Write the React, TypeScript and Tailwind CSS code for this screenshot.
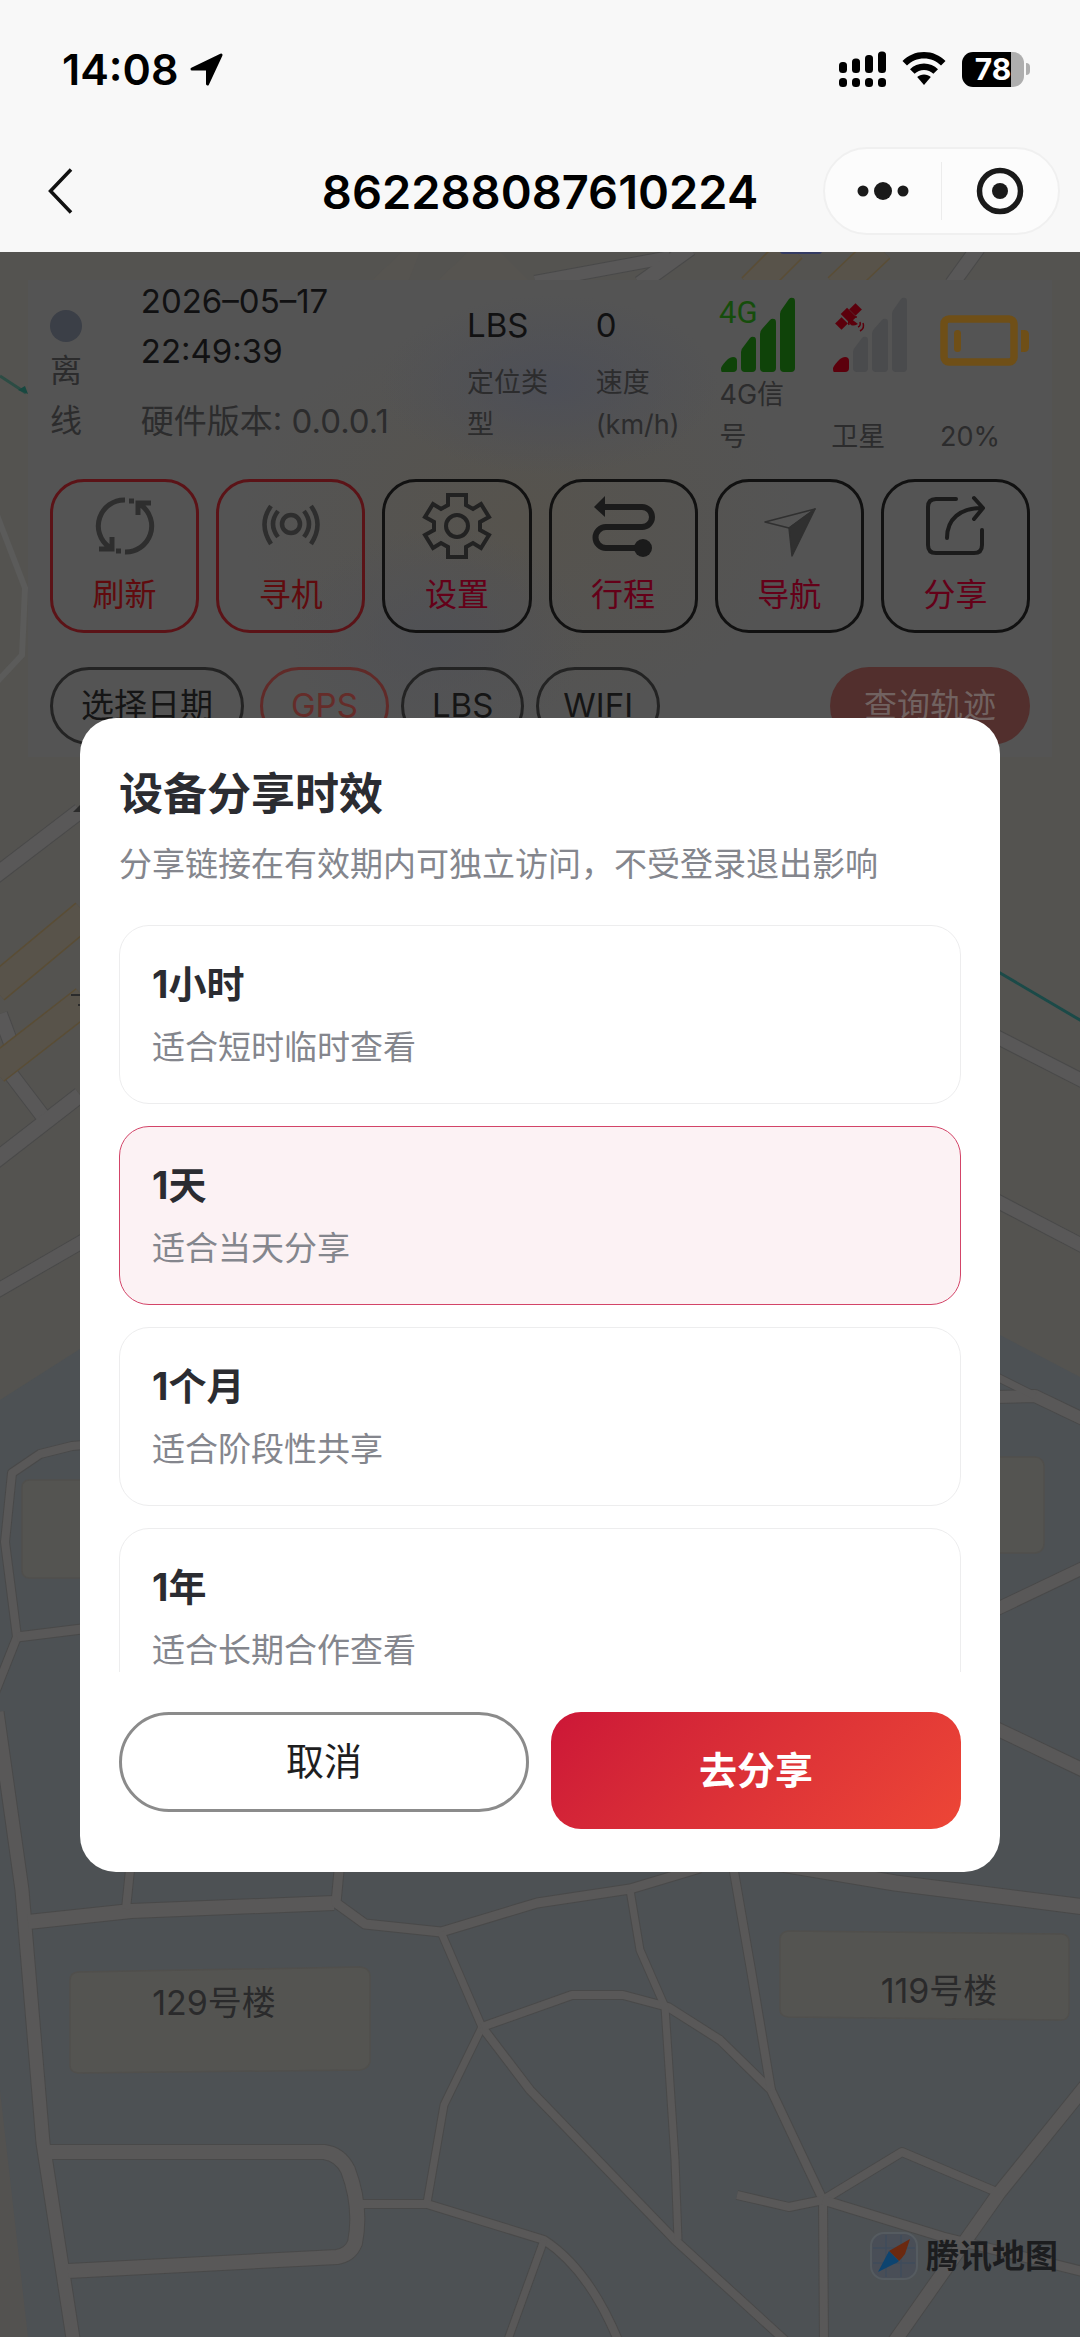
import React, { useState } from "react";

const FONT = "font-['Inter','Noto_Sans_CJK_SC',sans-serif]";

function StatusIcons() {
  return (
    <div className="flex items-center gap-4">
      <svg width="47" height="36" viewBox="0 0 47 36" fill="#000" aria-hidden="true">
        {[0, 13, 26, 39].map((x, i) => (
          <g key={x}>
            <rect x={x} y={11 - i * 3.5} width="8" height={11 + i * 3.5} rx="3.5" />
            <rect x={x} y="27" width="8" height="9" rx="3.5" />
          </g>
        ))}
      </svg>
      <svg width="44" height="34" viewBox="0 0 44 34" aria-hidden="true">
        <path d="M22 0C13.500 0 6 3.400 0.500 9L5 13.600C9.500 9 15.500 6.500 22 6.500S34.500 9 39 13.600L43.500 9C38 3.400 30.500 0 22 0Z" />
        <path d="M22 11.500C16.500 11.500 11.700 13.700 8 17.200L12.600 21.800C15.100 19.400 18.400 18 22 18S28.900 19.400 31.400 21.800L36 17.200C32.300 13.700 27.500 11.500 22 11.500Z" />
        <path d="M22 22.500C19.300 22.500 16.900 23.500 15.200 25.100L22 33L28.800 25.100C27.100 23.500 24.700 22.500 22 22.500Z" />
      </svg>
      <div className="flex items-center gap-0.5">
        <div className="flex h-[35px] w-[62px] items-center justify-center rounded-[11px] bg-linear-to-r from-black from-79% to-[#aeaeae] to-79% text-[30px] leading-none font-bold text-white">
          78
        </div>
        <div className="h-3 w-1 rounded-r-full bg-[#aeaeae]" />
      </div>
    </div>
  );
}

function Header() {
  return (
    <header className="bg-[#f8f8f8] text-black">
      <div className="flex h-[138px] items-center justify-between pr-[50px] pl-[62px]">
        <div className="flex items-center gap-3">
          <span className="text-[43px] leading-none font-semibold">14:08</span>
          <svg width="33" height="33" viewBox="0 0 33 33" aria-hidden="true">
            <path
              d="M31 2L17.500 31V17.500Q17.500 16 16 16H2Z"
              fill="#000"
              stroke="#000"
              strokeWidth="3"
              strokeLinejoin="round"
            />
          </svg>
        </div>
        <StatusIcons />
      </div>
      <div className="grid h-[114px] grid-cols-[1fr_auto_1fr] items-start px-5 pt-[9px]">
        <button aria-label="返回" className="ml-6 flex h-[88px] w-12 items-center">
          <svg width="32" height="50" viewBox="0 0 32 50" fill="none" aria-hidden="true">
            <path d="M27 3.500L6.500 25L27 46.500" stroke="#111" strokeWidth="3.500" />
          </svg>
        </button>
        <h1 className="text-[47px] leading-[90px] font-semibold">862288087610224</h1>
        <div className="flex h-[88px] w-[237px] items-center justify-self-end rounded-full border-2 border-[#f0f0f0] bg-[#fcfcfc]">
          <button aria-label="更多" className="flex h-full flex-1 items-center justify-center">
            <svg width="52" height="20" viewBox="0 0 52 20" fill="#1a1a1a" aria-hidden="true">
              <circle cx="6" cy="10" r="5.500" />
              <circle cx="26" cy="10" r="9" />
              <circle cx="46" cy="10" r="5.500" />
            </svg>
          </button>
          <div className="h-[58px] w-px bg-[#ececec]" />
          <button aria-label="关闭" className="flex h-full flex-1 items-center justify-center">
            <svg width="48" height="48" viewBox="0 0 48 48" aria-hidden="true">
              <circle cx="24" cy="24" r="20.500" fill="none" stroke="#1a1a1a" strokeWidth="5.500" />
              <circle cx="24" cy="24" r="8" fill="#1a1a1a" />
            </svg>
          </button>
        </div>
      </div>
    </header>
  );
}

const ROADS: { d: string; w: number }[] = [
  { d: "M-5 876L80 811", w: 15 },
  { d: "M0 1014L12 1046", w: 14 },
  { d: "M10 1073L45 1119", w: 14 },
  { d: "M-5 1161L80 1095", w: 15 },
  { d: "M-5 1292L85 1240", w: 13 },
  { d: "M95 1444L72 1446L40 1454L12 1473L5 1542L17 1637L-6 1695", w: 8 },
  { d: "M17 1637L90 1628", w: 9 },
  { d: "M-3 1712L22 1890L43 2143L74 2345", w: 13 },
  { d: "M995 1036L1085 1082", w: 13 },
  { d: "M995 1200L1085 1247", w: 13 },
  { d: "M995 1397L1035 1396L1085 1420", w: 12 },
  { d: "M995 1376L1035 1396", w: 7 },
  { d: "M995 1610L1085 1567", w: 12 },
  { d: "M995 1728L1085 1771", w: 13 },
  { d: "M28 1922L131 1911L334 1903", w: 14 },
  { d: "M131 1860L126 1909", w: 8 },
  { d: "M340 1860L336 1903L365 1924L441 1932L537 1903L630 1889L700 1868", w: 9 },
  { d: "M441 1932L482 2027L444 2105L427 2203", w: 7 },
  { d: "M482 2027L530 2090L675 2240L790 2345", w: 8 },
  { d: "M482 2027L572 1995H623L668 2007L720 2040L771 2090L823 2200L824 2345", w: 8 },
  { d: "M630 1890L640 1950L665 2007L675 2160L678 2240", w: 7 },
  { d: "M732 1860L751 1970L771 2090", w: 8 },
  { d: "M770 1862L895 1883L1085 1907", w: 15 },
  { d: "M737 2195L789 2207L823 2200L902 2152L999 2193", w: 8 },
  { d: "M823 2200L943 2237L1085 2272", w: 9 },
  { d: "M1088 2083L999 2193L892 2345", w: 13 },
  { d: "M50 2152H324Q340 2154 348 2170Q362 2207 355 2243Q350 2255 337 2257L68 2271", w: 14 },
  { d: "M360 2204H427L544 2240Q590 2270 620 2345", w: 8 },
  { d: "M544 2240L506 2345", w: 7 },
  { d: "M535 282L670 257", w: 12 },
  { d: "M640 284L690 248", w: 15 },
  { d: "M952 284L978 248", w: 14 },
];

const AVENUES = ["M-5 989L85 914", "M-5 1070L85 1000", "M752 288L792 248", "M838 288L880 248"];

function MapCanvas() {
  return (
    <svg
      className="absolute inset-0 h-full w-full"
      viewBox="0 252 1080 2085"
      preserveAspectRatio="xMidYMin slice"
      fill="none"
      aria-hidden="true"
    >
      <rect y="252" width="1080" height="2085" fill="#545350" />
      <path d="M0 1400L80 1349L540 1250L1000 1335L1080 1377V2337H0Z" fill="#4d5154" />
      <path d="M0 2090L28 2337H0Z" fill="#535250" />
      <g fill="#545451" stroke="#504f4c" strokeWidth="1.500">
        <rect x="22" y="1480" width="120" height="98" rx="7" />
        <rect x="900" y="1457" width="144" height="96" rx="9" />
        <path d="M78 1972L360 1967Q370 1968 370 1976V2062Q368 2069 360 2070L78 2073Q70 2072 70 2066V1980Q70 1973 78 1972Z" />
        <path d="M788 1931L1062 1934Q1069 1935 1069 1941V2013Q1068 2020 1061 2020L788 2017Q780 2016 780 2010V1938Q781 1932 788 1931Z" />
      </g>
      {ROADS.map((r) => (
        <path key={`e${r.d}`} d={r.d} stroke="#494949" strokeWidth={r.w + 2} strokeLinejoin="round" />
      ))}
      {ROADS.map((r) => (
        <path key={r.d} d={r.d} stroke="#595858" strokeWidth={r.w} strokeLinejoin="round" />
      ))}
      {AVENUES.map((d) => (
        <g key={d}>
          <path d={d} stroke="#5a4d35" strokeWidth="30" />
          <path d={d} stroke="#58534a" strokeWidth="27" />
        </g>
      ))}
      <path d="M370 282L402 252H420L408 282Z M436 282L468 252H500L530 282Z" fill="#565450" />
      <rect x="780" y="246" width="42" height="8" rx="3" fill="#343b63" />
      <path d="M-5 510L25 588L22 655L-5 684" stroke="#5b5b5a" strokeWidth="6" />
      <path d="M0 376L26 393" stroke="#2c4c44" strokeWidth="3" />
      <path d="M18 390L28 394L25 386Z" fill="#174840" />
      <path d="M995 970L1085 1023" stroke="#1b4a48" strokeWidth="3" />
      <path d="M73 812L82 803V812Z" fill="#2b2b2b" />
      <path d="M71 995H82M78 1005H82" stroke="#2b2b2b" strokeWidth="2" />
      <g fill="#2a2a2b" fontSize="34" textAnchor="middle">
        <text x="214" y="2015">129号楼</text>
        <text x="939" y="2003">119号楼</text>
      </g>
    </svg>
  );
}

const BARS = [
  "M3 76Q2 76 2 72Q3 69 9 63Q12 61 14 61Q18 61 18 65V72Q18 76 14 76Z",
  "M22 56Q22 53 25 50L31 42Q33 40 35 41Q37 41 37 45V72Q37 76 33 76H26Q22 76 22 72Z",
  "M41 38Q41 35 43 33L51 24Q53 22 55 23Q57 23 57 27V72Q57 76 53 76H45Q41 76 41 72Z",
  "M61 18Q61 15 63 13L70 3Q72 1 74 2Q76 2 76 6V72Q76 76 72 76H65Q61 76 61 72Z",
];

function SignalIcon() {
  return (
    <svg className="overflow-visible" width="78" height="78" viewBox="0 0 78 78" fill="#0f4309" aria-hidden="true">
      {BARS.map((d) => (
        <path key={d} d={d} />
      ))}
      <text x="0" y="27" fontSize="31" fontFamily="Roboto" fill="#164d0c">
        4G
      </text>
    </svg>
  );
}

function SatelliteIcon() {
  return (
    <svg width="78" height="78" viewBox="0 0 78 78" fill="#4a4b4d" aria-hidden="true">
      {BARS.map((d, i) => (
        <path key={d} d={d} fill={i === 0 ? "#5c000c" : "#4a4b4d"} />
      ))}
      <g fill="#5c000c">
        <rect x="20" y="9" width="9" height="9" transform="rotate(-45 24.500 13.500)" />
        <rect x="6" y="23" width="9" height="9" transform="rotate(-45 10.500 27.500)" />
        <rect x="13" y="13" width="9" height="13" transform="rotate(-45 17.500 19.500)" />
        <path d="M19 22L27 28Q21 31 19 28Q17 26 19 22Z" />
      </g>
      <path d="M18 29Q16 20 26 21M27 31Q30 30 29 26M29 35Q34 32 32 27" fill="none" stroke="#5c000c" strokeWidth="1.500" />
    </svg>
  );
}

function BatteryIcon() {
  return (
    <svg width="90" height="78" viewBox="0 0 90 78" fill="#6f4f17" aria-hidden="true">
      <rect x="4" y="23" width="70" height="43" rx="5" fill="none" stroke="#6f4f17" strokeWidth="7.500" />
      <rect x="14" y="34" width="7" height="22" rx="3.500" />
      <path d="M81 34H84Q89 34 89 39V51Q89 56 84 56H81Z" />
    </svg>
  );
}

function StatsRow() {
  return (
    <div className="grid grid-cols-[91fr_327fr_129fr_124fr_112fr_109fr_88fr] text-[27px] leading-[42px] text-[#2c2c2d]">
      <div className="flex flex-col pt-[30px]">
        <span className="size-8 rounded-full bg-[#3b3f47]" />
        <span className="mt-1 w-8 text-[32px] leading-[50px]">离线</span>
      </div>
      <div className="flex flex-col text-[33px] text-[#111112]">
        <span>2026–05–17</span>
        <span className="mt-1 leading-[50px]">22:49:39</span>
        <span className="mt-5 leading-[50px] text-[#2c2c2d]">硬件版本: 0.0.0.1</span>
      </div>
      <div className="flex flex-col pt-5">
        <span className="text-[33px] leading-[50px] text-[#111112]">LBS</span>
        <span className="mt-3 w-[84px]">定位类型</span>
      </div>
      <div className="flex flex-col pt-5">
        <span className="text-[33px] leading-[50px] text-[#111112]">0</span>
        <span className="mt-3">
          速度
          <br />
          (km/h)
        </span>
      </div>
      <div className="flex flex-col pt-4">
        <SignalIcon />
        <span className="w-[72px]">4G信号</span>
      </div>
      <div className="flex flex-col justify-between pt-4">
        <SatelliteIcon />
        <span>卫星</span>
      </div>
      <div className="flex flex-col justify-between pt-4">
        <BatteryIcon />
        <span>20%</span>
      </div>
    </div>
  );
}

const ACTIONS: { label: string; frame: string; icon: React.ReactNode }[] = [
  {
    label: "刷新",
    frame: "border-[#5b1317] text-[#600b0e]",
    icon: (
      <g stroke="#2e2e2e" strokeWidth="5">
        <path d="M35 9A26 26 0 0 0 19 56M22 46V58H9M35 61A26 26 0 0 0 51 14M48 24V12H61" />
        <path d="M26 60H31M39 10H44" />
      </g>
    ),
  },
  {
    label: "寻机",
    frame: "border-[#5b1317] text-[#600b0e]",
    icon: (
      <g stroke="#2e2e2e" strokeWidth="4.500">
        <circle cx="35" cy="33" r="9" />
        <path d="M22 20Q12 33 22 46M48 20Q58 33 48 46M15 15Q2 33 15 53M55 15Q68 33 55 53" />
      </g>
    ),
  },
  {
    label: "设置",
    frame: "border-[#111111] text-[#640018]",
    icon: (
      <g stroke="#222222" strokeWidth="4">
        <path d="M26 4H44V14L51 18L59 13L67 26L58 31V39L67 44L59 57L51 52L44 56V66H26V56L19 52L11 57L3 44L12 39V31L3 26L11 13L19 18L26 14Z" />
        <circle cx="35" cy="35" r="11" />
      </g>
    ),
  },
  {
    label: "行程",
    frame: "border-[#111111] text-[#640018]",
    icon: (
      <g>
        <path d="M15 16H54A10 10 0 0 1 54 36H18A10 10 0 0 0 18 57H55" stroke="#1b1b1b" strokeWidth="6" />
        <path d="M6 16L17 5V26Z" fill="#1b1b1b" />
        <circle cx="55" cy="57" r="9" fill="#1b1b1b" />
      </g>
    ),
  },
  {
    label: "导航",
    frame: "border-[#111111] text-[#640018]",
    icon: (
      <g stroke="#303030" strokeWidth="1.500" strokeLinejoin="round">
        <path d="M61 18L11 31L35 37Z" />
        <path d="M61 18L35 37L38 65Z" fill="#303030" />
      </g>
    ),
  },
  {
    label: "分享",
    frame: "border-[#111111] text-[#640018]",
    icon: (
      <g stroke="#1b1b1b" strokeWidth="4" strokeLinecap="round" strokeLinejoin="round">
        <path d="M36 8H16Q8 8 8 16V54Q8 62 16 62H54Q62 62 62 54V39M27 47C27 28 40 17 62 17M54 7L63 17L54 28" />
      </g>
    ),
  },
];

function ControlPanel() {
  return (
    <section className="relative mx-7 mt-7 bg-[#545454] bg-[radial-gradient(ellipse_170px_90px_at_51%_22%,#4d4f57,transparent),radial-gradient(ellipse_150px_110px_at_40%_75%,#505155,transparent),radial-gradient(ellipse_280px_200px_at_48%_50%,#56534d,transparent)] px-[22px] pb-3">
      <StatsRow />
      <div className="mt-[21px] grid grid-cols-6 gap-[17px]">
        {ACTIONS.map((a) => (
          <button
            key={a.label}
            className={`flex h-[154px] flex-col items-center rounded-[34px] border-3 pt-[9px] text-[32px] leading-[48px] ${a.frame}`}
          >
            <svg width="70" height="70" viewBox="0 0 70 70" fill="none" aria-hidden="true">
              {a.icon}
            </svg>
            <span className="mt-2.5">{a.label}</span>
          </button>
        ))}
      </div>
      <div className="mt-[34px] flex gap-3 text-[33px] text-[#151515]">
        <button className="mr-1 h-[78px] rounded-full border-3 border-[#232323] px-7">选择日期</button>
        <button className="h-[78px] rounded-full border-3 border-[#602a28] px-7 text-[#652c29]">GPS</button>
        <button className="h-[78px] rounded-full border-3 border-[#232323] px-7">LBS</button>
        <button className="h-[78px] rounded-full border-3 border-[#232323] px-6">WIFI</button>
        <button className="ml-auto h-[78px] rounded-full bg-[#522f2d] px-[34px] text-[#716260]">查询轨迹</button>
      </div>
    </section>
  );
}

function MapCredit() {
  return (
    <div className="absolute right-[22px] bottom-[57px] flex items-center gap-2">
      <svg width="48" height="48" viewBox="0 0 48 48" aria-hidden="true">
        <rect x="1" y="1" width="46" height="46" rx="13" fill="#494e57" stroke="#555b60" strokeWidth="2" />
        <path d="M16 3V45M31 3V45M3 16H45M3 31H45" stroke="#3f4c5c" strokeWidth="1.500" />
        <path d="M40 7L19 19L29 29Q32 26 35 22Z" fill="#6b2910" />
        <path d="M8 40L19 19L29 29Q27 31 24 32Z" fill="#0d4470" />
      </svg>
      <span className="text-[33px] leading-[48px] font-bold text-[#1c1d1f]">腾讯地图</span>
    </div>
  );
}

const OPTIONS = [
  { id: "hour", title: "1小时", note: "适合短时临时查看" },
  { id: "day", title: "1天", note: "适合当天分享" },
  { id: "month", title: "1个月", note: "适合阶段性共享" },
  { id: "year", title: "1年", note: "适合长期合作查看" },
];

function ShareDialog() {
  const [selected, setSelected] = useState("day");
  return (
    <div className="absolute inset-0 flex items-center justify-center px-20">
      <div
        role="dialog"
        aria-labelledby="share-title"
        className="w-full rounded-[36px] bg-white px-[39px] pt-[43px] pb-[43px]"
      >
        <h2 id="share-title" className="text-[44px] leading-[66px] font-bold text-[#2b2c31]">
          设备分享时效
        </h2>
        <p className="mt-3 text-[33px] leading-[50px] text-[#84868d]">分享链接在有效期内可独立访问，不受登录退出影响</p>
        <div
          role="radiogroup"
          aria-labelledby="share-title"
          className="mt-9 flex max-h-[747px] flex-col gap-[22px] overflow-y-auto [scrollbar-width:none]"
        >
          {OPTIONS.map((o) => (
            <label
              key={o.id}
              className="relative flex shrink-0 flex-col rounded-[30px] border border-[#ededee] px-8 pt-[31px] pb-[31px] has-checked:border-[#d34468] has-checked:bg-[#fcf2f4]"
            >
              <input
                type="radio"
                name="duration"
                className="sr-only"
                checked={selected === o.id}
                onChange={() => setSelected(o.id)}
              />
              <span className="text-[38px] leading-[55px] font-bold text-[#2b2c31]">{o.title}</span>
              <span className="mt-2.5 text-[33px] leading-[50px] text-[#84868d]">{o.note}</span>
            </label>
          ))}
        </div>
        <div className="mt-10 grid grid-cols-2 items-start gap-[22px] text-[38px]">
          <button className="h-[100px] rounded-full border-3 border-[#8b8b8b] text-[#1e1e1f]">取消</button>
          <button className="h-[117px] rounded-[30px] bg-linear-135 from-[#cc1637] to-[#ed4636] font-bold text-white">
            去分享
          </button>
        </div>
      </div>
    </div>
  );
}

export default function App() {
  return (
    <div className={`flex min-h-screen flex-col ${FONT}`}>
      <Header />
      <main className="relative flow-root flex-1 overflow-hidden bg-[#4d5154]">
        <MapCanvas />
        <ControlPanel />
        <MapCredit />
        <ShareDialog />
      </main>
    </div>
  );
}
